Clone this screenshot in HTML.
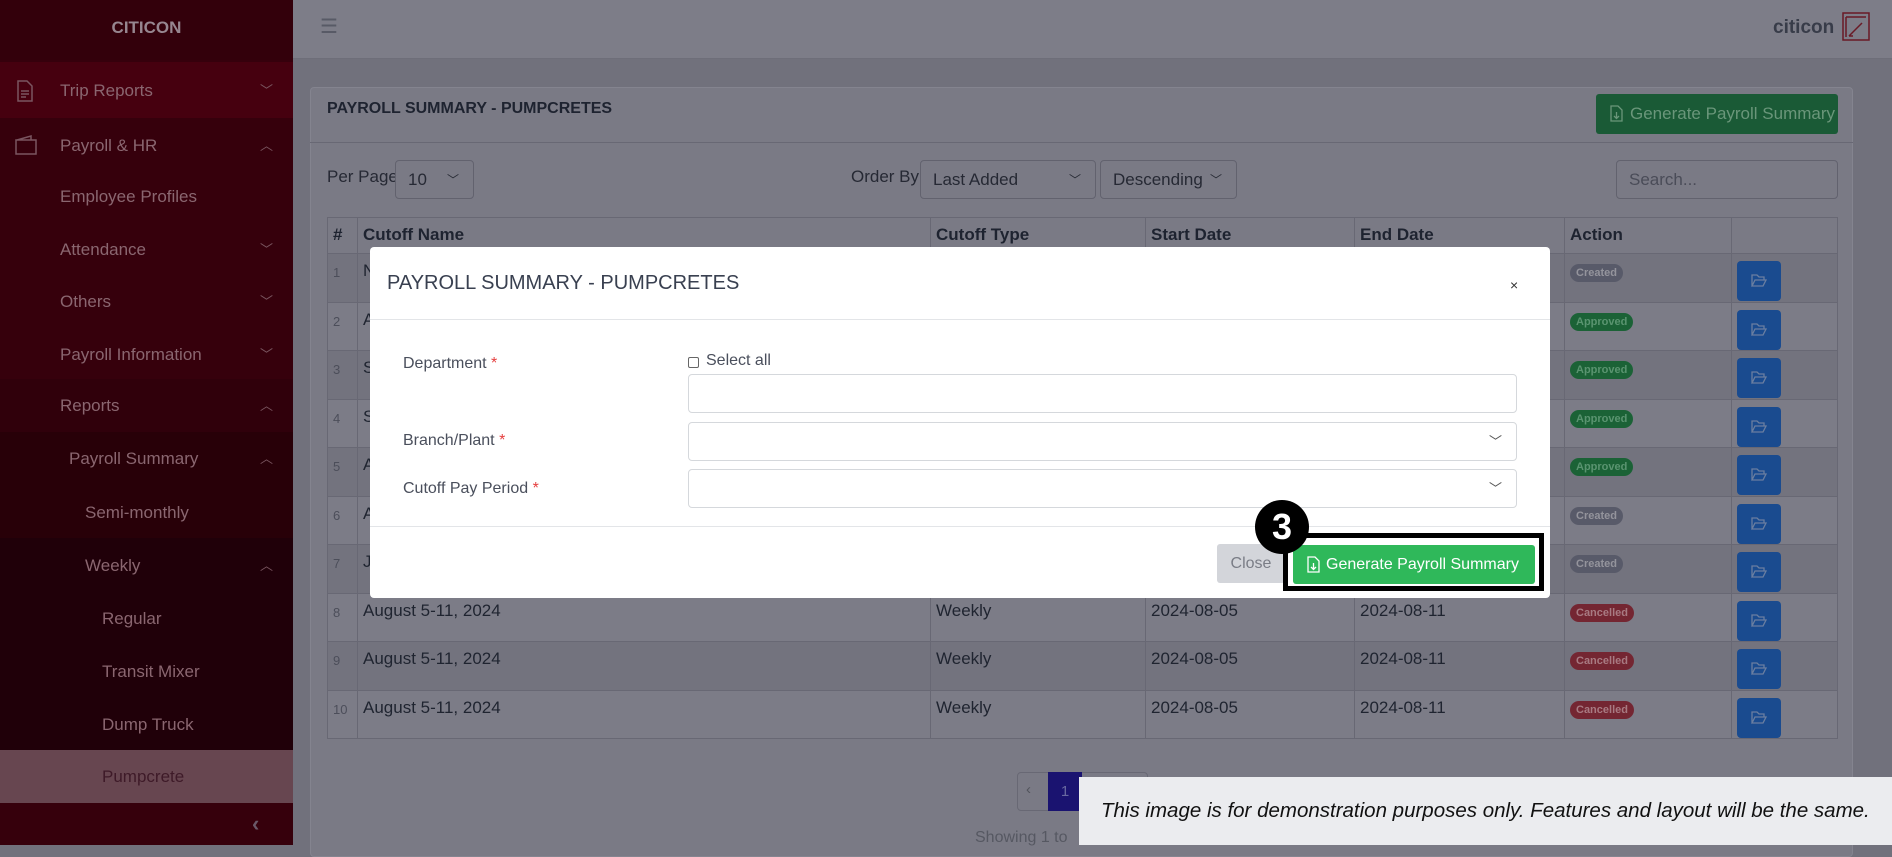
<!DOCTYPE html>
<html><head><meta charset="utf-8"><style>
*{box-sizing:border-box;margin:0;padding:0}
body{width:1892px;height:845px;overflow:hidden;position:relative;background:#71717c;font-family:"Liberation Sans",sans-serif}
.a{position:absolute}
.sb{left:0;top:0;width:293px;height:845px;background:#36000c}
.si{position:absolute;left:0;width:293px;height:53px;color:#8a6670;font-size:17px;line-height:53px}
.chev{position:absolute;right:20px;top:0;font-size:13px;color:#7a5560}
.top{left:293px;top:0;width:1599px;height:59px;background:#7d7d88;border-bottom:1px solid #6e6e79}
.card{left:310px;top:87px;width:1543px;height:770px;background:#7a7a85;border:1px solid #84848f;border-radius:4px}
table{position:absolute;left:327px;top:217px;width:1511px;border-collapse:collapse;font-size:17px;color:#1f2430}
td,th{border:1px solid #686874;vertical-align:top;padding:7px 5px 0 5px;text-align:left}
th{height:36px;padding-top:7px;font-weight:bold;color:#1e2330}
td{height:48.5px}
tr.o td{background:#73737e}
tr.e td{background:#7c7c87}
td.n{font-size:13px;color:#4c4e5a;padding-top:11px}
.bd{display:inline-block;font-size:11px;font-weight:bold;color:#94949c;border-radius:10px;padding:3px 6px;margin-top:0}
.cr{background:#585a69}.ap{background:#1b6236;color:#5a9470}.ca{background:#742632;color:#a87a82}
.fb{display:block;width:44px;height:40px;background:#1a4b8f;border-radius:4px;margin:0;position:relative}
.fb svg{position:absolute;left:14px;top:13px}
.sel{position:absolute;border:1px solid #62626e;border-radius:4px;background:#7a7a85;color:#262934;font-size:17px;line-height:38px;padding-left:12px}
.modal{left:370px;top:247px;width:1180px;height:351px;background:#fff;border-radius:4px}
.lbl{position:absolute;left:33px;font-size:16px;color:#4a4f5c}
.lbl b{color:#e53e3e;font-weight:normal}
.inp{position:absolute;left:318px;width:829px;border:1px solid #d5d8dc;border-radius:4px;height:39px}
.inp span{position:absolute;right:14px;top:8px;font-size:13px;color:#555}
</style></head><body>
<div class="a sb">
<div class="a" style="left:0;top:0;width:293px;height:60px;background:#33000b;color:#978690;font-weight:bold;font-size:17px;text-align:center;line-height:56px">CITICON</div>
<div class="si" style="top:62px;height:56px;background:#46000f;line-height:58px">
<svg class="a" style="left:15px;top:17px" width="20" height="24" viewBox="0 0 20 24"><path d="M3 2h9l5 5v15H3z M6 12h8 M6 15h8 M6 18h5" fill="none" stroke="#7a5560" stroke-width="1.5"/></svg>
<span style="position:absolute;left:60px">Trip Reports</span><span class="chev">﹀</span></div>
<div class="si" style="top:119px"><svg class="a" style="left:14px;top:15px" width="24" height="22" viewBox="0 0 24 22"><path d="M2 6h20v14H2z M3 6l14-4v4" fill="none" stroke="#7a5560" stroke-width="1.5"/></svg><span style="position:absolute;left:60px">Payroll &amp; HR</span><span class="chev">︿</span></div>
<div class="si" style="top:170px"><span style="position:absolute;left:60px">Employee Profiles</span></div>
<div class="si" style="top:223px"><span style="position:absolute;left:60px">Attendance</span><span class="chev">﹀</span></div>
<div class="si" style="top:275px"><span style="position:absolute;left:60px">Others</span><span class="chev">﹀</span></div>
<div class="si" style="top:328px"><span style="position:absolute;left:60px">Payroll Information</span><span class="chev">﹀</span></div>
<div class="si" style="top:379px;background:#30000b"><span style="position:absolute;left:60px">Reports</span><span class="chev">︿</span></div>
<div class="si" style="top:432px;height:106px;background:#280008"></div>
<div class="si" style="top:432px"><span style="position:absolute;left:69px">Payroll Summary</span><span class="chev">︿</span></div>
<div class="si" style="top:486px"><span style="position:absolute;left:85px">Semi-monthly</span></div>
<div class="si" style="top:538px;height:212px;background:#200009"></div>
<div class="si" style="top:539px"><span style="position:absolute;left:85px">Weekly</span><span class="chev">︿</span></div>
<div class="si" style="top:592px"><span style="position:absolute;left:102px">Regular</span></div>
<div class="si" style="top:645px"><span style="position:absolute;left:102px">Transit Mixer</span></div>
<div class="si" style="top:698px"><span style="position:absolute;left:102px">Dump Truck</span></div>
<div class="si" style="top:750px;background:#674650;color:#3e1a28"><span style="position:absolute;left:102px">Pumpcrete</span></div>
<div class="si" style="top:803px;height:42px;background:#36000c;line-height:42px"><span style="position:absolute;left:252px;font-size:22px;font-weight:bold;color:#6a5868">‹</span></div>
</div>
<div class="a top">
<div class="a" style="left:27px;top:14px;font-size:20px;color:#585a66">☰</div>
<div class="a" style="left:1480px;top:17px;font-size:19px;font-weight:bold;color:#383c49">citicon</div>
<svg class="a" style="left:1549px;top:12px" width="28" height="29" viewBox="0 0 28 29"><rect x="1" y="1" width="26" height="27" fill="none" stroke="#6a1a26" stroke-width="1.5"/><path d="M4 5h20 M4 5v20 M7 24l13-13 M7 24h4" fill="none" stroke="#6a1a26" stroke-width="1.5"/></svg>
</div>
<div class="a card"></div>
<div class="a" style="left:310px;top:142px;width:1543px;height:1px;background:#686874"></div>
<div class="a" style="left:327px;top:100px;font-size:16px;font-weight:bold;color:#1e2330">PAYROLL SUMMARY - PUMPCRETES</div>
<div class="a" style="left:1596px;top:94px;width:242px;height:40px;background:#1a5a36;border-radius:3px;color:#6a967a;font-size:17px;line-height:40px;padding-left:34px">Generate Payroll Summary<svg class="a" style="left:14px;top:11px" width="13" height="17" viewBox="0 0 13 17"><path d="M1 1h7l4 4v11H1z M6.5 7v6 M4 11l2.5 2.5L9 11" fill="none" stroke="#6a967a" stroke-width="1.3"/></svg></div>
<div class="a" style="left:327px;top:167px;font-size:17px;color:#262934">Per Page</div>
<div class="sel" style="left:395px;top:160px;width:79px;height:39px">10<span style="position:absolute;right:14px;font-size:12px">﹀</span></div>
<div class="a" style="left:851px;top:167px;font-size:17px;color:#262934">Order By</div>
<div class="sel" style="left:920px;top:160px;width:176px;height:39px">Last Added<span style="position:absolute;right:14px;font-size:12px">﹀</span></div>
<div class="sel" style="left:1100px;top:160px;width:137px;height:39px">Descending<span style="position:absolute;right:14px;font-size:12px">﹀</span></div>
<div class="sel" style="left:1616px;top:160px;width:222px;height:39px;color:#4a4c58">Search...</div>
<table>
<tr><th style="width:30px">#</th><th style="width:573px">Cutoff Name</th><th style="width:215px">Cutoff Type</th><th style="width:209px">Start Date</th><th style="width:210px">End Date</th><th style="width:167px">Action</th><th></th></tr>
<tr class="o"><td class="n">1</td><td>N</td><td></td><td></td><td></td><td><span class="bd cr">Created</span></td><td><span class="fb"><svg width="16" height="13" viewBox="0 0 16 13"><path d="M1 12V1h5l2 2h5v3 M1 12l3-6h11l-3 6z" fill="none" stroke="#6a7ea0" stroke-width="1.3"/></svg></span></td></tr>
<tr class="e"><td class="n">2</td><td>A</td><td></td><td></td><td></td><td><span class="bd ap">Approved</span></td><td><span class="fb"><svg width="16" height="13" viewBox="0 0 16 13"><path d="M1 12V1h5l2 2h5v3 M1 12l3-6h11l-3 6z" fill="none" stroke="#6a7ea0" stroke-width="1.3"/></svg></span></td></tr>
<tr class="o"><td class="n">3</td><td>S</td><td></td><td></td><td></td><td><span class="bd ap">Approved</span></td><td><span class="fb"><svg width="16" height="13" viewBox="0 0 16 13"><path d="M1 12V1h5l2 2h5v3 M1 12l3-6h11l-3 6z" fill="none" stroke="#6a7ea0" stroke-width="1.3"/></svg></span></td></tr>
<tr class="e"><td class="n">4</td><td>S</td><td></td><td></td><td></td><td><span class="bd ap">Approved</span></td><td><span class="fb"><svg width="16" height="13" viewBox="0 0 16 13"><path d="M1 12V1h5l2 2h5v3 M1 12l3-6h11l-3 6z" fill="none" stroke="#6a7ea0" stroke-width="1.3"/></svg></span></td></tr>
<tr class="o"><td class="n">5</td><td>A</td><td></td><td></td><td></td><td><span class="bd ap">Approved</span></td><td><span class="fb"><svg width="16" height="13" viewBox="0 0 16 13"><path d="M1 12V1h5l2 2h5v3 M1 12l3-6h11l-3 6z" fill="none" stroke="#6a7ea0" stroke-width="1.3"/></svg></span></td></tr>
<tr class="e"><td class="n">6</td><td>A</td><td></td><td></td><td></td><td><span class="bd cr">Created</span></td><td><span class="fb"><svg width="16" height="13" viewBox="0 0 16 13"><path d="M1 12V1h5l2 2h5v3 M1 12l3-6h11l-3 6z" fill="none" stroke="#6a7ea0" stroke-width="1.3"/></svg></span></td></tr>
<tr class="o"><td class="n">7</td><td>J</td><td></td><td></td><td></td><td><span class="bd cr">Created</span></td><td><span class="fb"><svg width="16" height="13" viewBox="0 0 16 13"><path d="M1 12V1h5l2 2h5v3 M1 12l3-6h11l-3 6z" fill="none" stroke="#6a7ea0" stroke-width="1.3"/></svg></span></td></tr>
<tr class="e"><td class="n">8</td><td>August 5-11, 2024</td><td>Weekly</td><td>2024-08-05</td><td>2024-08-11</td><td><span class="bd ca">Cancelled</span></td><td><span class="fb"><svg width="16" height="13" viewBox="0 0 16 13"><path d="M1 12V1h5l2 2h5v3 M1 12l3-6h11l-3 6z" fill="none" stroke="#6a7ea0" stroke-width="1.3"/></svg></span></td></tr>
<tr class="o"><td class="n">9</td><td>August 5-11, 2024</td><td>Weekly</td><td>2024-08-05</td><td>2024-08-11</td><td><span class="bd ca">Cancelled</span></td><td><span class="fb"><svg width="16" height="13" viewBox="0 0 16 13"><path d="M1 12V1h5l2 2h5v3 M1 12l3-6h11l-3 6z" fill="none" stroke="#6a7ea0" stroke-width="1.3"/></svg></span></td></tr>
<tr class="e"><td class="n">10</td><td>August 5-11, 2024</td><td>Weekly</td><td>2024-08-05</td><td>2024-08-11</td><td><span class="bd ca">Cancelled</span></td><td><span class="fb"><svg width="16" height="13" viewBox="0 0 16 13"><path d="M1 12V1h5l2 2h5v3 M1 12l3-6h11l-3 6z" fill="none" stroke="#6a7ea0" stroke-width="1.3"/></svg></span></td></tr>
</table>
<div class="a" style="left:1017px;top:772px;width:131px;height:39px;border:1px solid #686874;border-radius:4px"></div>
<div class="a" style="left:1026px;top:781px;color:#52545c;font-size:15px">‹</div>
<div class="a" style="left:1048px;top:772px;width:34px;height:39px;background:#1a1370;color:#6868a0;text-align:center;line-height:39px;font-size:15px">1</div>
<div class="a" style="left:975px;top:829px;color:#565862;font-size:16px">Showing 1 to</div>
<div class="a modal">
<div class="a" style="left:17px;top:25px;font-size:20px;color:#394050">PAYROLL SUMMARY - PUMPCRETES</div>
<div class="a" style="left:1140px;top:30px;font-size:14px;color:#333">×</div>
<div class="a" style="left:0;top:72px;width:1180px;height:1px;background:#e3e5e8"></div>
<div class="lbl" style="top:108px">Department <b>*</b></div>
<div class="a" style="left:318px;top:110px;width:11px;height:11px;border:1px solid #666;border-radius:2px"></div>
<div class="a" style="left:336px;top:105px;font-size:16px;color:#4a4f5c">Select all</div>
<div class="inp" style="top:127px"></div>
<div class="lbl" style="top:185px">Branch/Plant <b>*</b></div>
<div class="inp" style="top:175px"><span>﹀</span></div>
<div class="lbl" style="top:233px">Cutoff Pay Period <b>*</b></div>
<div class="inp" style="top:222px"><span>﹀</span></div>
<div class="a" style="left:0;top:279px;width:1180px;height:1px;background:#e3e5e8"></div>
<div class="a" style="left:847px;top:297px;width:68px;height:39px;background:#d3d5da;border-radius:3px;color:#7a7d86;font-size:16px;line-height:39px;text-align:center">Close</div>
<div class="a" style="left:913px;top:286px;width:261px;height:58px;border:5px solid #000"></div>
<div class="a" style="left:923px;top:298px;width:242px;height:39px;background:#2fb85a;border-radius:3px;color:#fff;font-size:16px;line-height:39px;padding-left:33px">Generate Payroll Summary<svg class="a" style="left:14px;top:11px" width="13" height="17" viewBox="0 0 13 17"><path d="M1 1h7l4 4v11H1z M6.5 7v6 M4 11l2.5 2.5L9 11" fill="none" stroke="#fff" stroke-width="1.3"/></svg></div>
<div class="a" style="left:885px;top:253px;width:54px;height:54px;border-radius:50%;background:#000;color:#fff;font-weight:bold;font-size:36px;text-align:center;line-height:54px">3</div>
</div>
<div class="a" style="left:1079px;top:777px;width:813px;height:68px;background:#ebecef;color:#111;font-style:italic;font-size:20.5px;line-height:68px;padding-left:22px;white-space:nowrap">This image is for demonstration purposes only. Features and layout will be the same.</div>
</body></html>
